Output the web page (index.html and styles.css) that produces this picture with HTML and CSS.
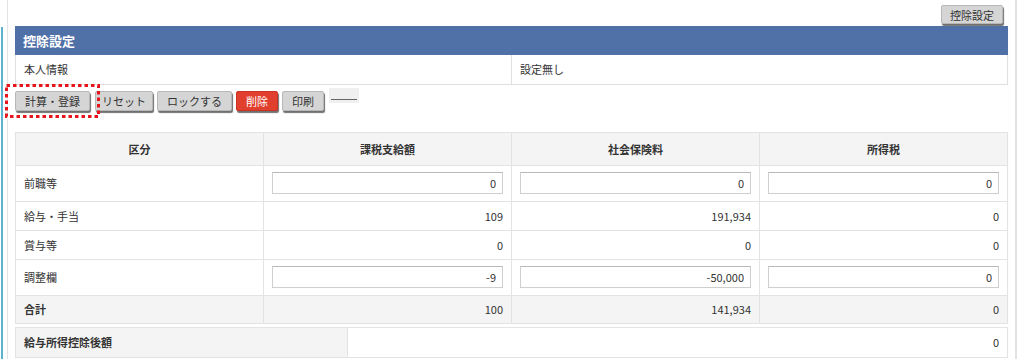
FILE: index.html
```html
<!DOCTYPE html>
<html>
    <head>
        <title>控除設定</title>
        <meta charset="UTF-8">
        <meta name="viewport" content="width=device-width, initial-scale=1.0">
        <link rel="stylesheet" href="styles.css">
    </head>
    <body>
        <div class="page">
            <div class="side">
                <div class="side-accent"></div>
            </div>
            <div class="main">
                <div class="toolbar">
                    <button class="btn" type="button">控除設定</button>
                </div>
                <div class="panel-heading">控除設定</div>
                <table class="info-table">
                    <tr>
                        <td>本人情報</td>
                        <td>設定無し</td>
                    </tr>
                </table>
                <div class="actions">
                    <span class="marked">
                        <button class="btn" type="button">計算・登録</button>
                        <svg class="mark" width="96" height="35" viewBox="0 0 96 35">
                            <rect x="1.5" y="1.5" width="92" height="31" fill="none" stroke="#e8141b" stroke-width="3" stroke-dasharray="3.5 3"/>
                        </svg>
                    </span>
                    <button class="btn btn-reset" type="button">リセット</button>
                    <button class="btn" type="button">ロックする</button>
                    <button class="btn btn-danger" type="button">削除</button>
                    <button class="btn" type="button">印刷</button>
                    <span class="btn-blank"><span class="blank-line"></span></span>
                </div>
                <table class="grid">
                    <tr class="grid-head">
                        <th>区分</th>
                        <th>課税支給額</th>
                        <th>社会保険料</th>
                        <th>所得税</th>
                    </tr>
                    <tr class="row-input">
                        <td class="label">前職等</td>
                        <td><input class="num-input" type="text" value="0"></td>
                        <td><input class="num-input" type="text" value="0"></td>
                        <td><input class="num-input" type="text" value="0"></td>
                    </tr>
                    <tr class="row-plain">
                        <td class="label">給与・手当</td>
                        <td class="num">109</td>
                        <td class="num">191,934</td>
                        <td class="num">0</td>
                    </tr>
                    <tr class="row-plain">
                        <td class="label">賞与等</td>
                        <td class="num">0</td>
                        <td class="num">0</td>
                        <td class="num">0</td>
                    </tr>
                    <tr class="row-input">
                        <td class="label">調整欄</td>
                        <td><input class="num-input" type="text" value="-9"></td>
                        <td><input class="num-input" type="text" value="-50,000"></td>
                        <td><input class="num-input" type="text" value="0"></td>
                    </tr>
                    <tr class="row-total">
                        <td class="label">合計</td>
                        <td class="num">100</td>
                        <td class="num">141,934</td>
                        <td class="num">0</td>
                    </tr>
                </table>
                <table class="summary">
                    <tr>
                        <td class="label">給与所得控除後額</td>
                        <td class="num">0</td>
                    </tr>
                </table>
            </div>
            <div class="rail"></div>
        </div>
    </body>
</html>
```
FILE: styles.css
```css
* {
  margin: 0;
  padding: 0;
  box-sizing: border-box;
}

body {
  font-family: "Noto Sans CJK JP", "DejaVu Sans", sans-serif;
  font-size: 11px;
  color: #333;
  background-color: #fff;
  width: 100vw;
  height: 100vh;
  overflow: hidden;
}

.page {
  display: flex;
  height: 100%;
}

.side {
  width: 8px;
  border-right: 1px solid #e4e4e4;
  padding-top: 27px;
}

.side-accent {
  width: 2px;
  height: 100%;
  margin-left: 1px;
  background-color: #5bb3cf;
}

.main {
  flex: 1;
  padding: 0 7px;
}

.rail {
  width: 9px;
  border-left: 2px solid #e2e2e2;
}

.toolbar {
  display: flex;
  justify-content: flex-end;
  padding: 5px 5px 0 0;
  height: 26px;
}

.btn {
  font-family: inherit;
  font-size: 11px;
  color: #333;
  height: 20px;
  line-height: 18px;
  padding: 0 9px;
  background-color: #d5d5d5;
  border: 1px solid #b8b8b8;
  border-radius: 2px;
  box-shadow: 1px 2px 1px #707070;
}

.toolbar .btn {
  height: 19px;
  padding: 0 8px;
}

.panel-heading {
  height: 29px;
  line-height: 29px;
  padding-left: 8px;
  background-color: #5071a8;
  color: #fff;
  font-size: 13px;
  font-weight: 700;
}

table {
  width: 100%;
  border-collapse: collapse;
}

.info-table td {
  width: 50%;
  height: 29px;
  padding: 0 8px;
  border: 1px solid #e0e0e0;
  border-top: none;
}

.actions {
  display: flex;
  align-items: flex-start;
  gap: 4px;
  padding-top: 6px;
  height: 47px;
}

.marked {
  position: relative;
  display: flex;
  margin-right: 1px;
}

.mark {
  position: absolute;
  left: -10px;
  top: -7px;
  z-index: 2;
}

.btn-reset {
  padding: 0 6px;
}

.btn-danger {
  background-color: #e2402f;
  border-color: #c93324;
  color: #fff;
}

.btn-blank {
  display: flex;
  align-items: flex-end;
  width: 30px;
  height: 15px;
  margin-top: -3px;
  margin-left: 1px;
  padding: 0 2px 3px;
  background-color: #f0f0f0;
}

.blank-line {
  flex: 1;
  border-bottom: 1px solid #666;
}

.grid th,
.grid td {
  width: 25%;
  border: 1px solid #e3e3e3;
}

.grid-head th {
  height: 33px;
  background-color: #f4f4f4;
  font-weight: 700;
  text-align: center;
}

.label {
  padding: 0 8px;
  text-align: left;
}

.num {
  padding: 0 8px;
  text-align: right;
}

.row-input td {
  height: 36px;
  padding: 0 8px;
}

.row-plain td {
  height: 29px;
}

.row-total td {
  height: 28px;
  background-color: #f4f4f4;
}

.row-total .label {
  font-weight: 700;
}

.num-input {
  display: block;
  width: 100%;
  height: 22px;
  padding: 0 6px;
  font-family: inherit;
  font-size: 11px;
  color: #333;
  text-align: right;
  border: 1px solid #cfcfcf;
  border-top-color: #b9b9b9;
  background-color: #fff;
}

.summary {
  margin-top: 3px;
}

.summary td {
  height: 30px;
  border: 1px solid #e3e3e3;
}

.summary .label {
  width: 332px;
  background-color: #f4f4f4;
  font-weight: 700;
}
```
